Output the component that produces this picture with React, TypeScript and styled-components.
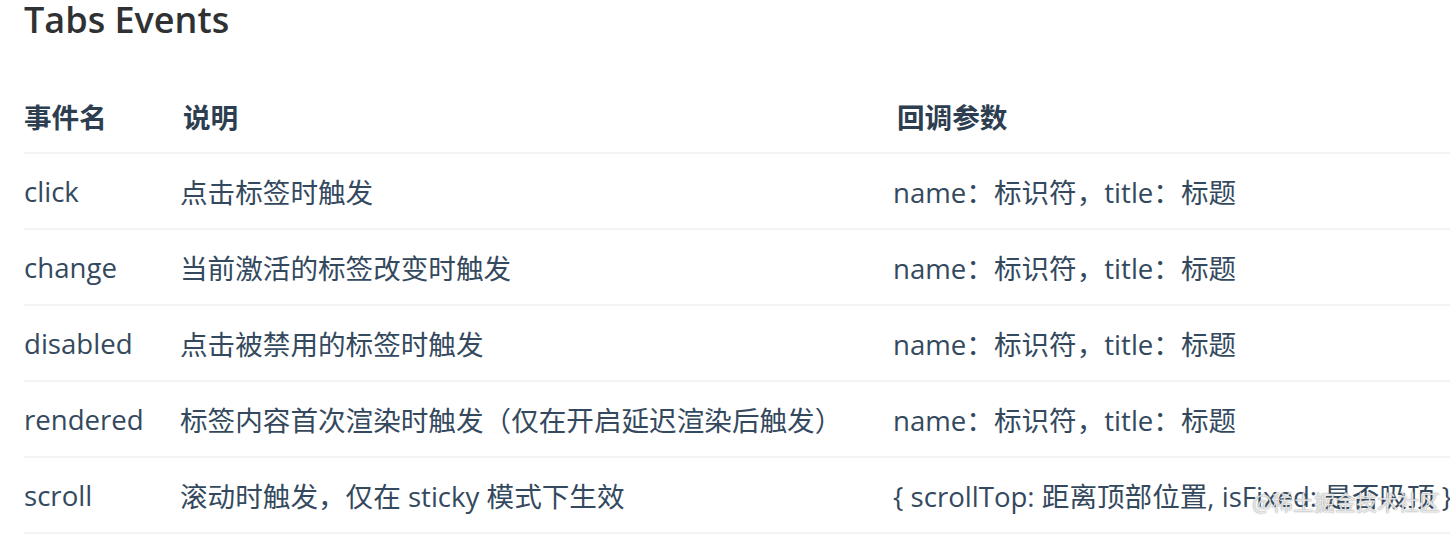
import React from "react";
import styled, { createGlobalStyle } from "styled-components";

const Global = createGlobalStyle`
  html, body { margin: 0; padding: 0; background: #fff; overflow: hidden; }
  body { width: 1450px; height: 534px; }
`;

const Page = styled.div`
  position: relative;
  width: 1450px;
  height: 534px;
  overflow: hidden;
  padding-left: 24px;
  box-sizing: border-box;
  font-family: "Open Sans", "Noto Sans CJK SC", sans-serif;
`;

const Title = styled.h3`
  margin: 0;
  height: 40px;
  font-size: 36px;
  line-height: 40px;
  font-weight: 600;
  color: #2f3133;
  margin-bottom: 56px;
`;

const Table = styled.div`
  display: grid;
  grid-template-columns: 156px 713px 1fr;
  width: 1426px;
`;

const Row = styled.div`
  display: contents;
`;

const Cell = styled.div<{ $head?: boolean; $shift?: number }>`
  height: ${(p) => (p.$head ? 56 : 74)}px;
  display: flex;
  align-items: ${(p) => (p.$head ? "flex-start" : "center")};
  white-space: nowrap;
  font-size: 27.6px;
  font-weight: ${(p) => (p.$head ? 700 : 400)};
  color: ${(p) => (p.$head ? "#2c3e50" : "#34495e")};
  padding-left: ${(p) => p.$shift ?? 0}px;
  border-bottom: 2px solid #f2f3f4;
`;

const Watermark = styled.div`
  position: absolute;
  right: 10px;
  bottom: 18px;
  font-family: "Noto Sans CJK SC", sans-serif;
  font-size: 21px;
  color: rgba(255, 255, 255, 0.8);
  text-shadow: 0 0 1px rgba(90, 90, 90, 0.6), 0 0 2px rgba(90, 90, 90, 0.4);
`;

const rows: [string, string, string][] = [
  ["click", "点击标签时触发", "name：标识符，title：标题"],
  ["change", "当前激活的标签改变时触发", "name：标识符，title：标题"],
  ["disabled", "点击被禁用的标签时触发", "name：标识符，title：标题"],
  ["rendered", "标签内容首次渲染时触发（仅在开启延迟渲染后触发）", "name：标识符，title：标题"],
  ["scroll", "滚动时触发，仅在 sticky 模式下生效", "{ scrollTop: 距离顶部位置, isFixed: 是否吸顶 }"],
];

export default function App() {
  return (
    <Page>
      <Global />
      <Title>Tabs Events</Title>
      <Table>
        <Row>
          <Cell $head>事件名</Cell>
          <Cell $head $shift={3}>说明</Cell>
          <Cell $head $shift={4}>回调参数</Cell>
        </Row>
        {rows.map((r) => (
          <Row key={r[0]}>
            <Cell>{r[0]}</Cell>
            <Cell>{r[1]}</Cell>
            <Cell>{r[2]}</Cell>
          </Row>
        ))}
      </Table>
      <Watermark>@稀土掘金技术社区</Watermark>
    </Page>
  );
}
